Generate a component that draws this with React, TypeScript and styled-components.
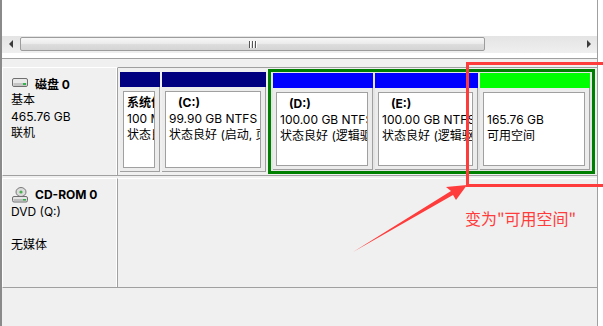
import React from 'react';
import styled, { createGlobalStyle } from 'styled-components';

const GlobalStyle = createGlobalStyle`
  * { box-sizing: border-box; }
  html, body { margin: 0; padding: 0; background: #fff; }
  body {
    font-family: Inter, "Noto Sans CJK SC", sans-serif;
    font-size: 12px;
    color: #000;
  }
`;

const partitions = [
  { key: 'sys', width: 40, header: '#000080', label: '系统保留', size: '100 MB NTFS', status: '状态良好 (系统, 活动, 主分区)' },
  { key: 'c', width: 104, header: '#000080', label: '(C:)', indent: true, size: '99.90 GB NTFS', status: '状态良好 (启动, 页面文件, 故障转储, 主分区)' },
];

const logical = [
  { key: 'd', width: 100, header: '#0000ff', label: '(D:)', indent: true, size: '100.00 GB NTFS', status: '状态良好 (逻辑驱动器)' },
  { key: 'e', width: 103, header: '#0000ff', label: '(E:)', indent: true, size: '100.00 GB NTFS', status: '状态良好 (逻辑驱动器)' },
  { key: 'free', width: 110, header: '#00ff00', label: '', size: '165.76 GB', status: '可用空间' },
];

export default function App() {
  return (
    <Page>
      <GlobalStyle />
      <Frame>
        <TopPane>
          <ListView />
          <HScroll>
            <ScrollButton><ArrowLeft /></ScrollButton>
            <Track>
              <Thumb><Grip><i /><i /><i /></Grip></Thumb>
            </Track>
            <ScrollButton><ArrowRight /></ScrollButton>
          </HScroll>
        </TopPane>

        <LowerPane>
          <DiskRow $height={109}>
            <DiskLabel>
              <TitleLine $height={18}>
                <DiskIcon />
                磁盘 0
              </TitleLine>
              <InfoLine>基本</InfoLine>
              <InfoLine>465.76 GB</InfoLine>
              <InfoLine>联机</InfoLine>
            </DiskLabel>
            <PartitionArea>
              {partitions.map((p) => (
                <Partition key={p.key} $width={p.width}>
                  <PartitionHeader $color={p.header} />
                  <PartitionBody>
                    <VolumeBox>
                      <VolumeName $indent={p.indent}>{p.label || '\u00a0'}</VolumeName>
                      <VolumeLine>{p.size}</VolumeLine>
                      <VolumeLine>{p.status}</VolumeLine>
                    </VolumeBox>
                  </PartitionBody>
                </Partition>
              ))}
              <Extended>
                {logical.map((p) => (
                  <Partition key={p.key} $width={p.width} $inner>
                    <PartitionHeader $color={p.header} />
                    <PartitionBody>
                      <VolumeBox>
                        <VolumeName $indent={p.indent}>{p.label || '\u00a0'}</VolumeName>
                        <VolumeLine>{p.size}</VolumeLine>
                        <VolumeLine>{p.status}</VolumeLine>
                      </VolumeBox>
                    </PartitionBody>
                  </Partition>
                ))}
              </Extended>
            </PartitionArea>
          </DiskRow>

          <DiskRow $height={110}>
            <DiskLabel>
              <TitleLine $height={19}>
                <CdIcon />
                CD-ROM 0
              </TitleLine>
              <InfoLine>DVD (Q:)</InfoLine>
              <InfoLine>{'\u00a0'}</InfoLine>
              <InfoLine>无媒体</InfoLine>
            </DiskLabel>
            <EmptyArea />
          </DiskRow>
        </LowerPane>
      </Frame>

      <Overlay viewBox="0 0 603 326">
        <rect x="467.5" y="63.5" width="200" height="122" fill="none" stroke="#ff3c3c" strokeWidth="3" />
        <polygon points="467,185 446,187 451,191 353,252 453,195 456,200" fill="#ff3c3c" />
      </Overlay>
      <Callout>变为"可用空间"</Callout>
    </Page>
  );
}

function DiskIcon() {
  return (
    <svg width="17" height="10" viewBox="0 0 17 10">
      <rect x="0.5" y="0.5" width="15" height="8" rx="1.5" fill="#e9e9e9" stroke="#6f6f6f" />
      <rect x="1.5" y="5" width="13" height="3" fill="#c4c4c4" />
      <rect x="11" y="5" width="3" height="2" fill="#2fb34a" />
    </svg>
  );
}

function CdIcon() {
  return (
    <svg width="17" height="16" viewBox="0 0 17 16">
      <ellipse cx="9" cy="5" rx="5" ry="4.5" fill="#dcdcdc" stroke="#7a7a7a" />
      <circle cx="9" cy="5" r="1.6" fill="#48b04f" />
      <rect x="0.5" y="9.5" width="15" height="5.5" rx="1.5" fill="#e6e6e6" stroke="#6f6f6f" />
      <rect x="1.5" y="12" width="13" height="2" fill="#bdbdbd" />
      <rect x="11" y="12" width="3" height="1.5" fill="#2fb34a" />
    </svg>
  );
}

const Page = styled.div`
  position: relative;
  width: 603px;
  height: 326px;
  overflow: hidden;
  background: #fff;
`;

const Frame = styled.div`
  width: 598px;
  height: 326px;
  border-left: 2px solid #8a8a8a;
  border-right: 1px solid #a0a0a0;
  background: #f0f0f0;
  display: flex;
  flex-direction: column;
`;

const TopPane = styled.div`
  height: 59px;
  background: #fff;
  border-bottom: 1px solid #a0a0a0;
  display: flex;
  flex-direction: column;
`;

const ListView = styled.div`
  height: 36px;
  background: #fff;
`;

const HScroll = styled.div`
  height: 17px;
  display: flex;
  background: linear-gradient(#e4e4e4, #efefef);
`;

const ScrollButton = styled.div`
  width: 17px;
  display: flex;
  align-items: center;
  justify-content: center;
  padding-bottom: 2px;
`;

const ArrowLeft = styled.span`
  width: 0;
  height: 0;
  border-top: 4px solid transparent;
  border-bottom: 4px solid transparent;
  border-right: 4px solid #3c3c3c;
`;

const ArrowRight = styled(ArrowLeft)`
  border-right: 0;
  border-left: 4px solid #3c3c3c;
`;

const Track = styled.div`
  flex: 1;
  display: flex;
  align-items: flex-start;
`;

const Thumb = styled.div`
  margin: 1px 0 0 1px;
  width: 465px;
  height: 14px;
  border: 1px solid #9c9c9c;
  border-radius: 2px;
  background: linear-gradient(#f7f7f7, #ececec 45%, #dcdcdc 55%, #d4d4d4);
  display: flex;
  align-items: center;
  justify-content: center;
`;

const Grip = styled.div`
  display: flex;
  gap: 2px;
  i {
    display: block;
    width: 1px;
    height: 7px;
    background: #555;
    box-shadow: 1px 0 0 #fff;
  }
`;

const LowerPane = styled.div`
  flex: 1;
  padding-top: 8px;
  display: flex;
  flex-direction: column;
  gap: 2px;
`;

const DiskRow = styled.div<{ $height: number }>`
  height: ${(p) => p.$height}px;
  display: flex;
`;

const DiskLabel = styled.div`
  width: 116px;
  padding: 6px 0 0 8px;
  border-top: 1px solid #fff;
  border-left: 1px solid #fff;
  border-right: 1px solid #a0a0a0;
  border-bottom: 1px solid #a0a0a0;
  box-shadow: inset -1px 0 0 #fff;
  background: #f0f0f0;
`;

const TitleLine = styled.div<{ $height: number }>`
  height: ${(p) => p.$height}px;
  display: flex;
  align-items: center;
  gap: 6px;
  padding-left: 1px;
  font-weight: bold;
  svg { flex: none; }
`;

const InfoLine = styled.div`
  line-height: 16.5px;
  white-space: nowrap;
`;

const PartitionArea = styled.div`
  flex: 1;
  display: flex;
  align-items: flex-start;
  gap: 2px;
  padding: 1px 2px;
  border-top: 1px solid #a0a0a0;
  border-bottom: 1px solid #a0a0a0;
`;

const EmptyArea = styled.div`
  flex: 1;
  border-top: 1px solid #fff;
  border-bottom: 1px solid #a0a0a0;
`;

const Partition = styled.div<{ $width: number; $inner?: boolean }>`
  width: ${(p) => p.$width}px;
  height: ${(p) => (p.$inner ? '100%' : '100px')};
  margin-top: ${(p) => (p.$inner ? 0 : 3)}px;
  display: flex;
  flex-direction: column;
  flex: none;
`;

const PartitionHeader = styled.div<{ $color: string }>`
  height: 15px;
  background: ${(p) => p.$color};
`;

const PartitionBody = styled.div`
  flex: 1;
  min-height: 0;
  display: flex;
  padding: 4px 4px 3px 3px;
  background: #ececec;
  border-right: 1px solid #a0a0a0;
  border-bottom: 1px solid #a0a0a0;
`;

const VolumeBox = styled.div`
  flex: 1;
  min-width: 0;
  overflow: hidden;
  background: #fff;
  border: 1px solid #a0a0a0;
  padding: 3px 0 0 3px;
  line-height: 16px;
`;

const VolumeLine = styled.div`
  overflow: hidden;
  white-space: nowrap;
  text-overflow: clip;
`;

const VolumeName = styled(VolumeLine)<{ $indent?: boolean }>`
  font-weight: bold;
  padding-left: ${(p) => (p.$indent ? 9 : 0)}px;
`;

const Extended = styled.div`
  height: 105px;
  display: flex;
  gap: 2px;
  padding: 1px 2px;
  border: 3px solid #008000;
  background: #e4e4e4;
  flex: none;
`;

const Overlay = styled.svg`
  position: absolute;
  left: 0;
  top: 0;
  width: 603px;
  height: 326px;
  pointer-events: none;
`;

const Callout = styled.div`
  position: absolute;
  left: 465px;
  top: 208px;
  font-family: "Noto Sans CJK SC", sans-serif;
  font-size: 16px;
  line-height: 20px;
  color: #ff3c3c;
  white-space: nowrap;
`;
